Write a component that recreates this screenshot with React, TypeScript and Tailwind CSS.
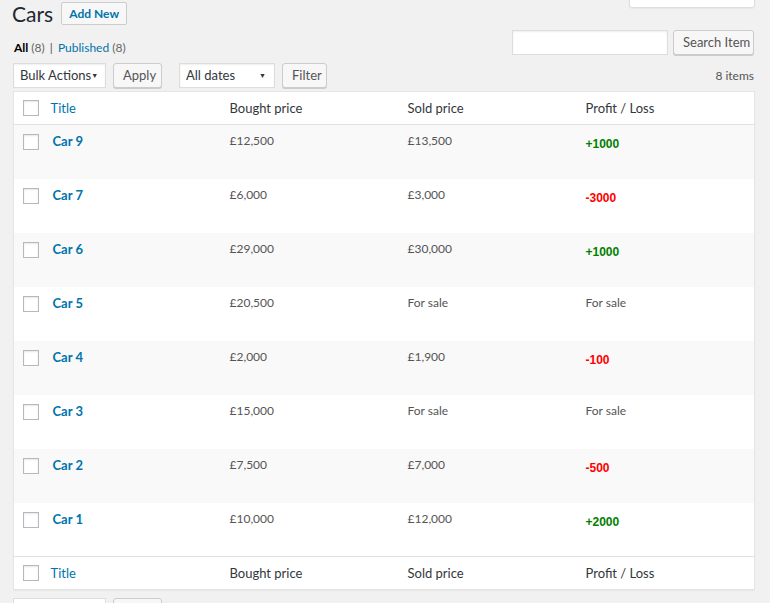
import React from 'react'

const cars = [
  { title: 'Car 9', bought: '£12,500', sold: '£13,500', profit: '+1000' },
  { title: 'Car 7', bought: '£6,000', sold: '£3,000', profit: '-3000' },
  { title: 'Car 6', bought: '£29,000', sold: '£30,000', profit: '+1000' },
  { title: 'Car 5', bought: '£20,500', sold: 'For sale', profit: 'For sale' },
  { title: 'Car 4', bought: '£2,000', sold: '£1,900', profit: '-100' },
  { title: 'Car 3', bought: '£15,000', sold: 'For sale', profit: 'For sale' },
  { title: 'Car 2', bought: '£7,500', sold: '£7,000', profit: '-500' },
  { title: 'Car 1', bought: '£10,000', sold: '£12,000', profit: '+2000' },
]

function Checkbox() {
  return (
    <span className="block w-[16px] h-[16px] bg-white border border-[#b4b9be] shadow-[inset_0_1px_2px_rgba(0,0,0,0.1)]" />
  )
}

function Button({ children, className = '' }: { children: React.ReactNode; className?: string }) {
  return (
    <button
      className={`h-[25px] px-[9px] rounded-[3px] border border-[#cccccc] bg-[#f7f7f7] text-[#555] text-[13px] leading-[23px] whitespace-nowrap shadow-[0_1px_0_#cccccc] ${className}`}
    >
      {children}
    </button>
  )
}

function Select({ label, width }: { label: string; width: string }) {
  return (
    <div
      className={`${width} h-[25px] flex items-center justify-between pl-[6px] pr-[8px] bg-white border border-[#dddddd] shadow-[inset_0_1px_2px_rgba(0,0,0,0.07)] text-[13px] text-[#32373c] whitespace-nowrap`}
    >
      <span>{label}</span>
      <span className="text-[7px] text-[#333]">▼</span>
    </div>
  )
}

function HeadRow({ top }: { top?: boolean }) {
  return (
    <tr className={top ? 'border-b border-[#e1e1e1]' : 'border-t border-[#e1e1e1]'}>
      <td className="w-[27px] h-[33px] pl-[9px] align-middle">
        <Checkbox />
      </td>
      <th className="w-[179px] px-[10px] pt-[2px] text-left font-normal text-[13px] text-[#0073aa]">Title</th>
      <th className="w-[178px] px-[10px] pt-[2px] text-left font-normal text-[13px] text-[#32373c]">Bought price</th>
      <th className="w-[178px] px-[10px] pt-[2px] text-left font-normal text-[13px] text-[#32373c]">Sold price</th>
      <th className="px-[10px] pt-[2px] text-left font-normal text-[13px] text-[#32373c]">Profit / Loss</th>
    </tr>
  )
}

function Profit({ value }: { value: string }) {
  if (value === 'For sale') return <span className="text-[#555]">{value}</span>
  const color = value.startsWith('+') ? 'text-[#008000]' : 'text-[#ff0000]'
  return (
    <span className={`block pt-[3px] font-['Liberation_Sans',sans-serif] font-bold text-[12px] ${color}`}>{value}</span>
  )
}

export default function App() {
  return (
    <div className="relative h-screen bg-[#f1f1f1] font-['Lato',sans-serif] text-[13px] text-[#444] px-[13px] overflow-hidden">
      {/* screen options tab */}
      <div className="absolute right-[15px] top-[-18px] w-[126px] h-[26px] bg-white border border-[#dddddd] rounded-b-[3px] shadow-[0_1px_1px_rgba(0,0,0,0.04)]" />

      <div className="flex items-center gap-[8px] pt-[2px] -ml-[1px]">
        <h1 className="text-[21px] leading-[23px] text-[#23282d] font-normal">Cars</h1>
        <button className="h-[23px] w-[66px] rounded-[2px] border border-[#cccccc] bg-[#f7f7f7] text-[#0073aa] text-[12px] font-bold leading-[21px] whitespace-nowrap">
          Add New
        </button>
      </div>

      <div className="flex items-end justify-between mt-[5px]">
        <div className="text-[12px] text-[#666] leading-[18px] pl-[1px] -mb-[2px]">
          <span className="text-[#000] font-bold">All</span> (8) <span className="text-[#555] px-[2px]">|</span>{' '}
          <span className="text-[#0073aa]">Published</span> (8)
        </div>
        <div className="flex items-center gap-[5px] mr-[3px]">
          <div className="w-[156px] h-[25px] bg-white border border-[#dddddd] shadow-[inset_0_1px_2px_rgba(0,0,0,0.07)]" />
          <Button className="w-[81px] px-0">Search Item</Button>
        </div>
      </div>

      <div className="flex items-center mt-[8px]">
        <Select label="Bulk Actions" width="w-[93px]" />
        <Button className="ml-[7px] w-[49px]">Apply</Button>
        <Select label="All dates" width="w-[96px] ml-[17px]" />
        <Button className="ml-[7px] w-[45px]">Filter</Button>
        <span className="ml-auto mr-[3px] text-[12px] text-[#555]">8 items</span>
      </div>

      <table className="mt-[3px] w-[742px] bg-white border border-[#e5e5e5] shadow-[0_1px_1px_rgba(0,0,0,0.04)] border-collapse table-fixed">
        <thead>
          <HeadRow top />
        </thead>
        <tbody>
          {cars.map((car, i) => (
            <tr key={car.title} className={`h-[54px] ${i % 2 === 0 ? 'bg-[#f9f9f9]' : 'bg-white'}`}>
              <td className="pl-[9px] pt-[9px] align-top">
                <Checkbox />
              </td>
              <td className="px-[12px] pt-[6px] align-top text-[13px] font-bold text-[#0073aa] leading-[20px]">
                {car.title}
              </td>
              <td className="px-[10px] pt-[6px] align-top text-[#555] leading-[20px] text-[12px]">{car.bought}</td>
              <td className="px-[10px] pt-[6px] align-top text-[#555] leading-[20px] text-[12px]">{car.sold}</td>
              <td className="px-[10px] pt-[6px] align-top leading-[20px] text-[12px]">
                <Profit value={car.profit} />
              </td>
            </tr>
          ))}
        </tbody>
        <tfoot>
          <HeadRow />
        </tfoot>
      </table>

      <div className="flex items-start mt-[8px]">
        <div className="w-[93px] h-[25px] bg-white border border-[#dddddd]" />
        <div className="ml-[7px] w-[49px] h-[25px] rounded-[3px] border border-[#cccccc] bg-[#f7f7f7]" />
      </div>
    </div>
  )
}
